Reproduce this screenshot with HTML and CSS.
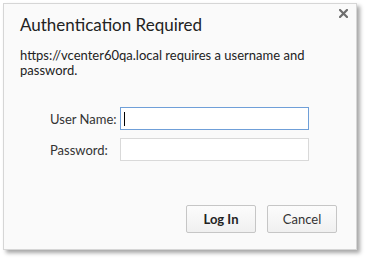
FILE: index.html
```html
<!DOCTYPE html>
<html>
<head>
<meta charset="utf-8">
<link rel="stylesheet" href="styles.css">
</head>
<body>
<div class="dialog">
  <svg class="close" width="9" height="9" viewBox="0 0 9 9"><path d="M1 1L8 8M8 1L1 8" stroke="#6e6e6e" stroke-width="2.2" stroke-linecap="square"/></svg>
  <h1 class="title">Authentication Required</h1>
  <p class="msg">https://vcenter60qa.local requires a username and password.</p>
  <div class="form">
    <div class="row">
      <label class="label">User Name:</label>
      <div class="input focus"><span class="caret"></span></div>
    </div>
    <div class="row">
      <label class="label">Password:</label>
      <div class="input"></div>
    </div>
  </div>
  <div class="buttons">
    <button class="btn primary">Log In</button>
    <button class="btn">Cancel</button>
  </div>
</div>
</body>
</html>
```
FILE: styles.css
```css
html, body { margin: 0; padding: 0; background: #ffffff; }
body {
  width: 367px; height: 261px; overflow: hidden;
  font-family: Lato, "Noto Sans", sans-serif;
  color: #222;
}
.dialog {
  position: relative;
  margin: 3px 0 0 3px;
  width: 354px; height: 247px;
  box-sizing: border-box;
  background: #fafafa;
  border: 1px solid #d6d6d6;
  box-shadow: 3px 3px 4px rgba(0,0,0,0.35);
  padding: 11px 16px 0 16px;
}
.close {
  position: absolute; right: 8px; top: 5px;
}
.title {
  margin: 0; font-weight: normal; font-size: 17px; line-height: 20px; color: #222;
}
.msg {
  margin: 13px 0 0 0; font-size: 13px; line-height: 15px; width: 290px; color: #222;
}
.form { margin-top: 29px; padding-left: 30px; display: flex; flex-direction: column; gap: 8px; }
.row { display: flex; align-items: center; }
.label { width: 70px; font-size: 13px; color: #333; }
.input {
  width: 189px; height: 23px; box-sizing: border-box;
  background: #fff; border: 1px solid #d9d9d9; position: relative;
}
.input.focus { border-color: #6f9fd8; }
.caret { position: absolute; left: 3px; top: 4px; width: 1px; height: 14px; background: #000; }
.buttons { display: flex; justify-content: flex-end; gap: 11px; margin-top: 44px; padding-right: 3px; }
.btn {
  width: 70px; height: 28px; box-sizing: border-box;
  border: 1px solid #c6c6c6; border-radius: 2px;
  background: linear-gradient(#fcfcfc, #f0f0f0);
  font-family: Lato, "Noto Sans", sans-serif;
  font-size: 13px; color: #333; padding: 0;
}
.btn.primary { font-weight: bold; color: #222; }
```
